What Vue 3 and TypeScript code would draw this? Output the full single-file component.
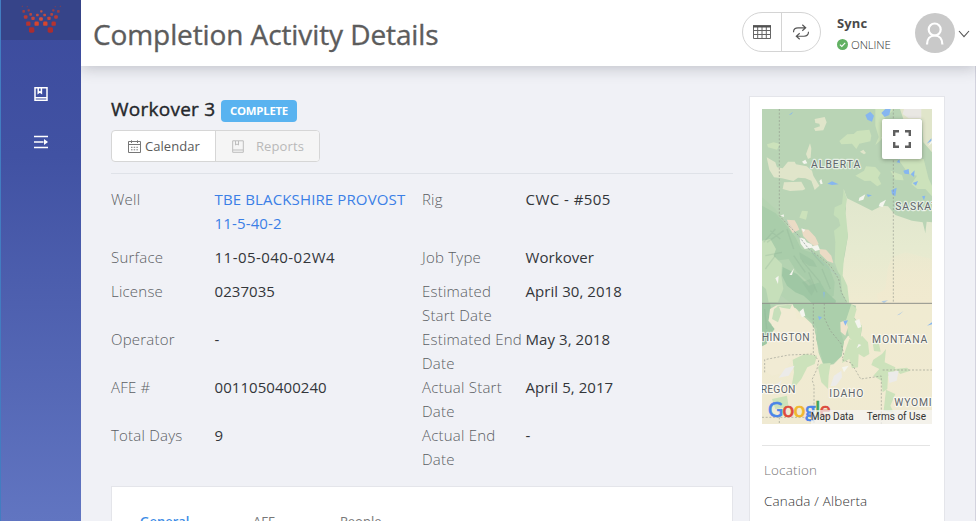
<script setup lang="ts">
interface Dot { x: number; y: number; r: number; c: string }
interface Field { label: string; value: string; link?: boolean; tall?: boolean; wide?: boolean }

const dots: Dot[] = [
  [67, 19, 2, '#71405f'], [82, 20, 2, '#71405f'], [166, 20, 2, '#71405f'], [181, 19, 2, '#71405f'],
  [71, 34, 4, '#9b3d46'], [86, 31, 3.5, '#9b3d46'], [124, 34, 3.5, '#bd5348'], [160, 31, 3.5, '#9b3d46'], [175, 34, 4, '#9b3d46'],
  [92, 43, 4, '#b24642'], [112, 45, 4, '#c24b3e'], [134, 45, 4, '#c24b3e'], [155, 43, 4, '#b24642'],
  [77, 51, 5.5, '#b83a35'], [99, 55, 5, '#c3443b'], [123, 57, 5.5, '#d34f3c'], [147, 55, 5, '#c3443b'], [168, 51, 5.5, '#b83a35'],
  [85, 71, 6.5, '#b8332f'], [110, 71, 6.5, '#d8452d'], [136, 71, 6.5, '#d8452d'], [161, 71, 6.5, '#b8332f'],
  [95, 90, 8, '#a92d31'], [151, 90, 8, '#a92d31'],
].map(([x, y, r, c]) => ({ x, y, r, c }) as Dot)

const left: Field[] = [
  { label: 'Well', value: 'TBE BLACKSHIRE PROVOST 11-5-40-2', link: true, tall: true },
  { label: 'Surface', value: '11-05-040-02W4', wide: true },
  { label: 'License', value: '0237035', tall: true },
  { label: 'Operator', value: '-', tall: true },
  { label: 'AFE #', value: '0011050400240', tall: true },
  { label: 'Total Days', value: '9', tall: true },
]
const right: Field[] = [
  { label: 'Rig', value: 'CWC - #505', wide: true },
  { label: 'Job Type', value: 'Workover' },
  { label: 'Estimated Start Date', value: 'April 30, 2018' },
  { label: 'Estimated End Date', value: 'May 3, 2018' },
  { label: 'Actual Start Date', value: 'April 5, 2017' },
  { label: 'Actual End Date', value: '-' },
]
const rows = left.map((l, i) => ({ id: i, l, r: right[i] }))
const tabs = ['General', 'AFE', 'People']
</script>

<template>
  <div class="app">
    <aside class="side">
      <div class="brand">
        <svg width="81" height="40" viewBox="0 0 243 120">
          <rect v-for="(d, i) in dots" :key="i" :x="d.x - d.r" :y="d.y - d.r" :width="d.r * 2" :height="d.r * 2" :rx="d.r * 0.55" :fill="d.c" />
        </svg>
      </div>
      <nav class="nav">
        <svg width="16" height="16" viewBox="0 0 16 16" fill="none" stroke="#fff" stroke-width="1.5">
          <path d="M2 1.8H14V14.2H2ZM2 11.7H14M5.2 2V7L6.8 5.8L8.4 7V2" />
        </svg>
        <svg width="16" height="16" viewBox="0 0 16 16" fill="none" stroke="#fff" stroke-width="1.5">
          <path d="M1 2.5H15M1 8H10.5M1 13.5H15" /><path d="M11 4.9L15 8L11 11.1Z" fill="#fff" stroke="none" />
        </svg>
      </nav>
    </aside>

    <div class="main">
      <header class="top">
        <h1>Completion Activity Details</h1>
        <div class="pill">
          <button>
            <svg width="18" height="14" viewBox="0 0 18 14" fill="none" stroke="#666" stroke-width="1">
              <path d="M.5 1.5H17.5V13.5H.5ZM.5 5.5H17.5M.5 9.5H17.5M4.7 2V13M9 2V13M13.3 2V13" /><path d="M0 1.3H18" stroke="#505050" stroke-width="2.4" />
            </svg>
          </button>
          <button>
            <svg width="18" height="16" viewBox="0 0 18 16" fill="none" stroke="#555" stroke-width="1.15">
              <path d="M1.5 8.2C1.5 5 3.5 3.8 6 3.8H13.5M10.3 .8L13.7 3.8L10.3 6.8M16.5 7.8C16.5 11 14.5 12.2 12 12.2H4.5M7.7 9.2L4.3 12.2L7.7 15.2" />
            </svg>
          </button>
        </div>
        <div class="sync">
          <b>Sync</b>
          <span class="online">
            <svg width="11" height="11" viewBox="0 0 11 11"><circle cx="5.5" cy="5.5" r="5.5" fill="#62b163" /><path d="M2.9 5.7L4.8 7.5L8.2 3.9" fill="none" stroke="#fff" stroke-width="1.1" /></svg>
            <span>ONLINE</span>
          </span>
        </div>
        <svg class="avatar" width="40" height="40" viewBox="0 0 40 40">
          <circle cx="20" cy="20" r="20" fill="#c9c9c9" />
          <g fill="none" stroke="#fff" stroke-width="2.2"><circle cx="19.7" cy="16.5" r="6" /><path d="M12 31.5C12 26 15 22.5 19.7 22.5S27.4 26 27.4 31.5" /></g>
        </svg>
        <svg class="chev" width="12" height="8" viewBox="0 0 12 8" fill="none" stroke="#555" stroke-width="1.1"><path d="M1 1L6 6.7L11 1" /></svg>
      </header>

      <div class="body">
        <section class="details">
          <div class="heading"><h2>Workover 3</h2><span class="badge">COMPLETE</span></div>
          <div class="btns">
            <button class="cal">
              <svg width="13" height="13" viewBox="0 0 13 13" fill="none" stroke="#777" stroke-width="1">
                <path d="M.5 1.5H12.5V12.5H.5ZM.5 4.5H12.5M3.5 .3V3M9.5 .3V3" /><path d="M3 7.3H10.5M3 9.8H10.5" stroke-dasharray="1.5 1.2" />
              </svg>
              <span>Calendar</span>
            </button>
            <button class="rep">
              <svg width="12" height="13" viewBox="0 0 12 13" fill="none" stroke="#bdbdbd" stroke-width="1">
                <path d="M.7 .8H11.3V12.3H.7ZM.7 10H11.3M3.5 1V5L5 4L6.5 5V1" />
              </svg>
              <span>Reports</span>
            </button>
          </div>
          <div class="fields">
            <div v-for="row in rows" :key="row.id" class="row" :class="{ tall: row.l.tall, first: row.id === 0 }">
              <span class="label">{{ row.l.label }}</span>
              <a v-if="row.l.link" class="value link">{{ row.l.value }}</a>
              <span v-else class="value" :class="{ wide: row.l.wide }">{{ row.l.value }}</span>
              <span class="label">{{ row.r.label }}</span>
              <span class="value" :class="{ wide: row.r.wide }">{{ row.r.value }}</span>
            </div>
          </div>
          <div class="tabs">
            <span v-for="(t, i) in tabs" :key="t" class="tab" :class="{ active: i === 0 }">{{ t }}</span>
          </div>
        </section>

        <aside class="card">
          <div class="map">
            <svg width="170" height="315" viewBox="0 0 510 945">
              <defs>
                <linearGradient id="prairie" x1="0" y1="240" x2="0" y2="945" gradientUnits="userSpaceOnUse"><stop offset="0" stop-color="#e0e6cd" /><stop offset=".25" stop-color="#e6ead0" /><stop offset=".5" stop-color="#f0ebd1" /><stop offset="1" stop-color="#f0ead2" /></linearGradient>
                <linearGradient id="warm" x1="0" y1="420" x2="0" y2="583" gradientUnits="userSpaceOnUse"><stop offset="0" stop-color="#f0e8ce" stop-opacity=".3" /><stop offset="1" stop-color="#f1ead0" /></linearGradient>
              </defs>
              <rect width="510" height="945" fill="#b9d4b5" />
              <!-- prairie and plains -->
              <path d="M245 240L255 268L290 285L330 305L360 290L378 292L400 318L450 335L482 340L490 372L494 338L510 340V945H0V700L60 590L120 570L235 500L248 440L258 380L246 330L252 300Z" fill="url(#prairie)" />
              <path d="M378 474L390 445L430 430L510 450V590H350L345 555L370 540Z" fill="url(#warm)" />
              <path d="M245 240L255 270L250 300L258 380L246 440L242 500L256 530L262 584L232 584L232 500L218 460L220 400L216 365L235 350L230 330L215 318L218 295L240 285Z" fill="#c5dfb9" />
              <!-- mountain forests -->
              <path d="M0 265L40 300L70 340L110 370L150 420L190 450L214 470L236 500L240 550L256 583L282 590L276 625L300 655L295 690L258 680L244 700L240 740L215 766L185 770L170 732L162 680L150 645L112 610L90 584L58 560L30 600L0 600Z" fill="#b4d3b1" />
              <path d="M60 583H232L268 583L262 625L244 640L236 670L246 700L238 742L210 764L186 768L176 735L162 690L165 660L150 635L126 618L108 600Z" fill="#abcfab" />
              <path d="M0 290L40 312L70 345L100 385L118 420L160 435L200 470L218 520L215 560L190 575L160 555L140 520L105 490L80 450L40 455L0 440Z" fill="#a9cdaa" />
              <path d="M62 474L105 495L140 530L175 520L190 545L222 575L220 583H150L125 560L100 550L75 530L60 500ZM0 583H24L28 605L18 635L38 660L22 680L14 705L0 712Z" fill="#9fc7a4" />
              <path d="M0 395L25 390L42 420L35 440L60 465L58 500L64 540L48 580H20L12 540L0 530Z" fill="#c6dfba" />
              <path d="M112 430L130 440L155 455L165 474L140 470L115 450ZM120 520L145 510L160 540L148 560Z" fill="#93bb9c" opacity=".4" />
              <!-- Columbia basin -->
              <path d="M24 600L45 588L92 586L100 605L104 628L138 636L158 660L158 702L142 728L108 738L88 750L70 790L30 800L0 780V715L14 705L24 680L40 660L20 635Z" fill="#f1ebd4" />
              <path d="M36 600L50 590L58 612L48 640L30 630ZM40 590L90 587L84 600L60 596Z" fill="#c6dfba" />
              <g fill="#cce2bb">
                <path d="M232 96L256 76L275 75L285 66L322 62L328 80L325 97L292 104L283 120L270 104L238 106ZM306 185L312 172L340 174L356 192L348 206L358 225L346 232L325 215L308 216L280 200ZM340 0L398 0L375 20L366 30L360 90L340 108L350 84L340 50ZM15 106L35 100L54 105L45 122L18 115Z" />
                <path d="M408 150L430 138L450 150L485 150L500 210L510 230V262L490 240L466 240L448 225L465 200L440 195ZM385 185L420 198L425 214L400 212ZM120 305L138 307L132 332L112 326Z" />
                <path d="M360 735L372 720L368 760L400 775L395 800L378 800L376 840L362 850L358 815L334 800L352 780L328 768L334 752ZM92 752L128 735L165 740L158 765L136 775L118 810L98 834L88 838L96 790ZM176 764L206 762L200 800L198 840L178 820L168 775ZM262 690L290 700L300 680L318 700L322 735L306 745L290 735L288 775L270 778L262 750L240 762L248 730Z" />
                <path d="M268 585L284 600L276 628L300 650L296 678L308 700L290 712L262 686L256 660L250 640ZM30 870L75 860L80 895L40 900ZM372 842L400 855L385 890L395 910L365 905ZM330 690L350 700L356 728L336 726ZM398 780L435 776L445 785L415 795Z" />
              </g>
              <g fill="#e0e5ca">
                <path d="M14 145L40 160L45 175L62 178L78 158L98 158L102 166L134 172L150 185L154 200L172 230L158 243L148 215L130 208L108 206L94 216L60 208L36 205L22 182ZM66 220L118 218L130 240L122 244L84 246L62 240ZM158 30L188 24L194 40L184 64L160 66L156 58L174 52L172 44L160 42ZM132 135L144 103L148 118L146 146L138 150Z" />
                <path d="M414 0H510V130L484 100L480 30H424ZM294 128L304 122L312 132L306 136Z" />
              </g>
              <path d="M426 0H478V28H440L422 15Z" fill="#e9e7e3" />
              <g fill="#ebdbc5">
                <path d="M75 332L98 334L106 348L112 362L92 372L82 356ZM118 360L140 362L160 384L170 405L160 414L140 398L124 382ZM172 420L192 422L208 440L214 462L196 456L174 434Z" />
                <path d="M235 640L250 634L258 655L250 680L236 668Z" fill="#f0e3cd" />
              </g>
              <g fill="#f4f5ee">
                <path d="M55 320L65 316L66 324ZM120 158L130 152L136 163L126 165ZM112 384L128 390L134 400L148 405L152 412L168 408L174 422L160 426L150 416L128 420L116 404ZM118 358L130 362L124 370ZM172 216L178 210L182 224L176 226ZM292 266L310 256L304 272L290 276ZM354 282L372 272L362 294L350 292ZM498 112L510 92V102ZM358 86L366 82L368 92Z" />
                <path d="M82 498L96 478L90 498ZM40 508L50 500L48 525ZM112 608L124 598L130 620L120 625ZM278 636L292 630L298 654L288 658ZM290 705L298 708L284 718ZM240 775L260 770L246 790Z" />
              </g>
              <g fill="#ecebe9">
                <path d="M216 800L238 785L240 805L222 830L205 832ZM378 790L410 785L404 815L382 822ZM70 778L98 770L80 800L50 806ZM36 832L60 812L50 838Z" />
              </g>
              <g fill="#86b6f0">
                <path d="M310 18L325 8L336 20L330 38L316 32ZM358 12L370 0H386L382 18L368 24ZM196 224L210 217L230 226L210 228ZM424 185L440 180L442 196L428 194ZM446 196L458 184L456 204ZM404 160L412 150L414 162ZM452 222L468 216L462 230ZM388 244L404 236L400 262L390 256ZM480 262L490 260L486 274ZM80 18L94 8L88 16ZM494 104L508 88V96ZM314 256L330 259L318 264Z" />
                <path d="M244 636L258 634L250 650ZM168 622L180 624L172 634ZM495 650L510 640V646ZM184 548L188 550L186 570Z" />
                <path d="M358 577L378 574L366 582ZM405 619L425 606L412 617Z" opacity=".6" />
              </g>
              <path d="M5 400L40 360M15 400L65 365M25 365L55 390M120 455L175 520M140 490L165 550M180 480L205 540M10 480L40 440M75 360L95 420M95 440L130 490M150 430L185 470M10 440L60 430M8 600L14 660" fill="none" stroke="#86aa91" stroke-width="4" opacity=".25" />
              <path d="M70 330Q110 390 160 440T230 500" fill="none" stroke="#9ebfcf" stroke-width="2" opacity=".4" />
              <g fill="none" stroke="#92958c" stroke-width="1.8" stroke-dasharray="6 5">
                <path d="M52 0V320L80 350L110 380L140 420L175 445L205 470L230 510L238 550L256 583M394 0V583M154 583V735L170 755L165 780L150 812L156 830V945M187 583V626L205 665L238 705L245 735L240 752L268 762L296 810L358 801V945M362 783H510M8 790V752L80 738L156 735M0 925H200M52 925V945" />
              </g>
              <path d="M0 583H510" stroke="#8f918b" stroke-width="3" />
              <g class="places">
                <text x="147" y="176" textLength="148">ALBERTA</text>
                <text x="400" y="302" textLength="126">SASKAT</text>
                <text x="-1" y="697" textLength="144">HINGTON</text>
                <text x="330" y="701" textLength="166">MONTANA</text>
                <text x="-4" y="853" textLength="104">REGON</text>
                <text x="202" y="865" textLength="102">IDAHO</text>
                <text x="397" y="890" textLength="136">WYOMIN</text>
              </g>
            </svg>
            <div class="google"><i class="b">G</i><i class="r">o</i><i class="y">o</i><i class="b">g</i><i class="g">l</i><i class="r">e</i></div>
            <div class="terms"><span>Map Data</span><span>Terms of Use</span></div>
            <div class="full">
              <svg width="18" height="18" viewBox="0 0 18 18" fill="none" stroke="#5f5f5f" stroke-width="2.4"><path d="M1.2 6V1.2H6M12 1.2H16.8V6M16.8 12V16.8H12M6 16.8H1.2V12" /></svg>
            </div>
          </div>
          <div class="loc">
            <span class="k">Location</span>
            <span class="v">Canada / Alberta</span>
          </div>
        </aside>
      </div>
    </div>
  </div>
</template>

<style>
body { margin: 0; overflow: hidden; }
</style>

<style scoped>
* { box-sizing: border-box; }
.app { display: flex; width: 976px; height: 521px; overflow: hidden; background: #f0f1f6; font-family: "Open Sans", "Noto Sans", sans-serif; color: #333; }
.side { position: relative; z-index: 1; width: 81px; flex: none; background: linear-gradient(#3c4b9d 0, #4152a3 30%, #6175c1 100%); border-left: 1px solid #427dc1; }
.brand { height: 40px; background: #364489; }
.brand svg { display: block; margin-left: -1px; }
.nav { display: flex; flex-direction: column; align-items: center; gap: 32px; padding-top: 46px; }
.main { flex: 1; min-width: 0; display: flex; flex-direction: column; }
.top { height: 66px; flex: none; display: flex; align-items: center; background: #fff; padding: 0 6px 0 12px; box-shadow: 0 2px 14px rgba(40, 45, 60, .25); position: relative; }
h1 { margin: 2px auto 0 0; font-size: 28px; line-height: 36px; letter-spacing: -.1px; font-weight: 400; -webkit-text-stroke: .35px #5c5c5c; color: #5c5c5c; white-space: nowrap; }
button { font: inherit; margin: 0; padding: 0; border: 0; background: none; display: flex; align-items: center; }
.pill { display: flex; width: 79px; height: 40px; border: 1px solid #d4d4d4; border-radius: 20px; margin-right: 16px; margin-top: -2px; }
.pill button { flex: 1; justify-content: center; }
.pill button + button { border-left: 1px solid #d4d4d4; }
.sync { display: flex; flex-direction: column; width: 78px; margin-top: 4px; }
.sync b { font-size: 13px; line-height: 18px; letter-spacing: .1px; color: #4a4a4a; font-weight: 700; }
.online { display: flex; align-items: center; gap: 3px; font-size: 11.5px; line-height: 25px; font-weight: 300; letter-spacing: -.15px; color: #333; }
.avatar { flex: none; }
.chev { flex: none; margin: 2px 0 0 3px; }
.body { flex: 1; display: flex; padding: 30px 30px 0 30px; gap: 16px; border-right: 1px solid #d3d3de; }
.details { width: 622px; flex: none; display: flex; flex-direction: column; }
.heading { display: flex; align-items: center; height: 28px; gap: 6px; }
h2 { margin: -2px 0 0; font-size: 19px; line-height: 28px; font-weight: 400; letter-spacing: .25px; -webkit-text-stroke: .4px #25282c; color: #25282c; white-space: nowrap; width: 104px; }
.badge { height: 22px; width: 76px; text-align: center; background: #59b3f0; color: #fff; border-radius: 4px; font-size: 11.4px; line-height: 22px; font-weight: 700; margin-top: 2px; letter-spacing: -.25px; }
.btns { display: flex; margin-top: 6px; height: 32px; width: 209px; flex: none; border: 1px solid #d6d6d6; border-radius: 4px; background: #fff; overflow: hidden; font-size: 13px; }
.cal { width: 103px; padding-left: 16px; gap: 4px; color: #5a5a5a; letter-spacing: .05px; }
.rep { flex: 1; border-left: 1px solid #d6d6d6; background: #f5f5f5; color: #b9b9b9; padding-left: 16px; gap: 12px; letter-spacing: .1px; }
.fields { margin-top: 11px; border-top: 1px solid #dfe2e8; padding-top: 13px; font-size: 15px; line-height: 24px; }
.row { display: grid; grid-template-columns: 103.6px 207.4px 103.6px 1fr; height: 34px; }
.row.tall { height: 48px; }
.row.first { height: 58px; }
.label { color: #5b5e63; font-weight: 300; letter-spacing: .22px; padding-right: 1px; }
.value { color: #33363a; font-weight: 400; letter-spacing: .05px; }
.value.wide { letter-spacing: .45px; }
.value.link { color: #3b7fe6; width: 196px; letter-spacing: .13px; }
.tabs { margin-top: 15px; flex: 1; display: flex; background: #fff; border: 1px solid #e4e5ea; padding: 24px 28px; font-size: 13px; line-height: 20px; }
.tab { color: #777; }
.tab:nth-child(1) { width: 113px; }
.tab:nth-child(2) { width: 87px; }
.tab.active { color: #3b8be6; font-weight: 600; }
.card { width: 196px; flex: none; background: #fff; border: 1px solid #e4e5ea; padding: 12px; }
.map { position: relative; width: 170px; height: 315px; overflow: hidden; }
.map > svg { display: block; }
.places text { font-family: Roboto, sans-serif; font-size: 31px; font-weight: 400; fill: #5f666b; stroke: #fff; stroke-width: 7px; stroke-opacity: .65; stroke-linejoin: round; paint-order: stroke; }
.google { position: absolute; left: 6px; bottom: 2px; font-family: Lato, sans-serif; font-size: 20.5px; line-height: 25px; font-weight: 400; -webkit-text-stroke: .7px currentColor; letter-spacing: -.35px; white-space: nowrap; }
.google i { font-style: normal; }
.google .b { color: #4a85e8; }
.google .r { color: #dc4a3c; }
.google .y { color: #f0b72e; }
.google .g { color: #3ba45a; }
.terms { position: absolute; right: 0; bottom: 0; height: 14px; display: flex; gap: 13px; padding: 0 6px 0 0; background: rgba(245, 245, 245, .7); font-family: Roboto, sans-serif; font-size: 10px; line-height: 14px; color: #333; white-space: nowrap; }
.full { position: absolute; right: 10px; top: 10px; width: 40px; height: 40px; background: #fff; border-radius: 2px; box-shadow: 0 1px 4px rgba(0, 0, 0, .3); display: flex; align-items: center; justify-content: center; }
.loc { margin: 21px 2px 0 0; border-top: 1px solid #e4e4e4; padding: 14px 0 0 2px; display: flex; flex-direction: column; font-size: 13.4px; line-height: 20px; gap: 11px; font-weight: 300; letter-spacing: .2px; }
.k { color: #777; }
.v { color: #333; }
</style>
